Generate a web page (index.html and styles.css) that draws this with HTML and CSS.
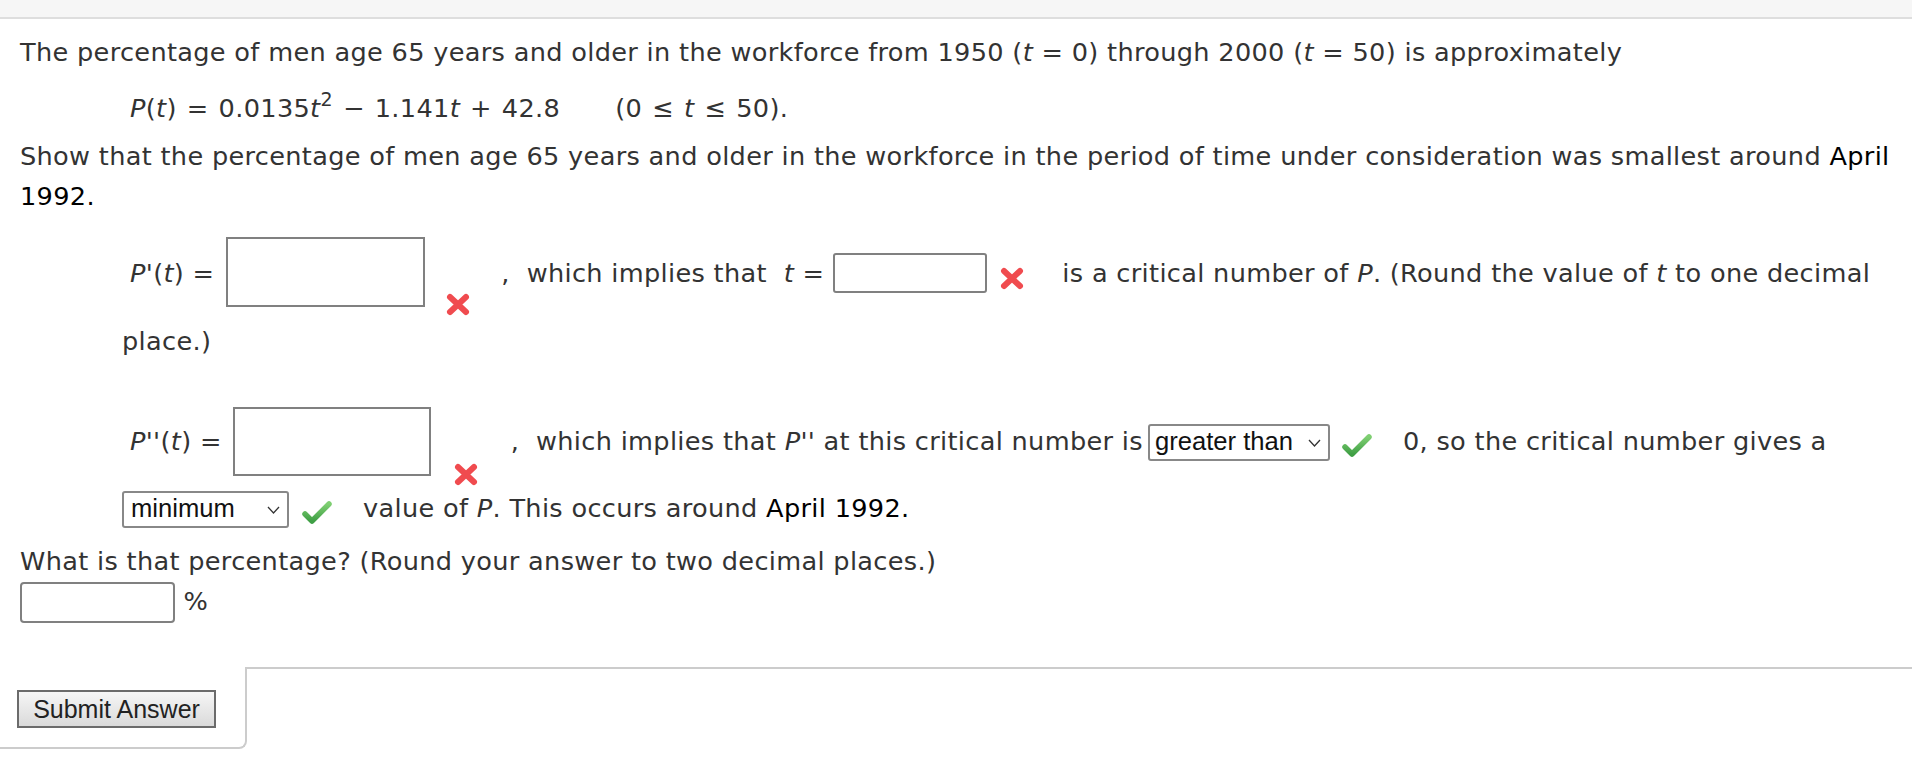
FILE: index.html
```html
<!DOCTYPE html>
<html lang="en">
<head>
<meta charset="utf-8">
<title>Question</title>
<link rel="stylesheet" href="styles.css">
</head>
<body>
<div class="topbar"></div>
<main class="content">
<p class="intro">The percentage of men age 65 years and older in the workforce from 1950 (<i>t</i> = 0) through 2000 (<i>t</i> = 50) is approximately</p>
<p class="formula"><i>P</i>(<i>t</i>) = 0.0135<i>t</i><sup>2</sup> − 1.141<i>t</i> + 42.8<span class="domain">(0 ≤ <i>t</i> ≤ 50).</span></p>
<p class="show">Show that the percentage of men age 65 years and older in the workforce in the period of time under consideration was smallest around <span class="dark">April 1992.</span></p>
<p class="step step-1"><span class="lbl"><i>P'</i>(<i>t</i>) =</span><span class="box box-lg"></span><svg class="mark xm xm-1" width="28" height="25" viewBox="0 0 28 25"><path d="M6 5 L22 20 M22 5 L6 20" stroke="#f04b4f" stroke-width="6" stroke-linecap="round"/></svg><span class="after">,&nbsp; which implies that&nbsp; <i>t</i> =</span><span class="box box-sm"></span><svg class="mark xm xm-2" width="28" height="25" viewBox="0 0 28 25"><path d="M6 5 L22 20 M22 5 L6 20" stroke="#f04b4f" stroke-width="6" stroke-linecap="round"/></svg><span class="tail">is a critical number of <i>P</i>. (Round the value of <i>t</i> to one decimal place.)</span></p>
<p class="step step-2"><span class="lbl"><i>P''</i>(<i>t</i>) =</span><span class="box box-lg2"></span><svg class="mark xm xm-3" width="28" height="25" viewBox="0 0 28 25"><path d="M6 5 L22 20 M22 5 L6 20" stroke="#f04b4f" stroke-width="6" stroke-linecap="round"/></svg><span class="after after-2">,&nbsp; which implies that <i>P''</i> at this critical number is</span><span class="sel sel-gt">greater than<svg class="chev" width="13" height="8" viewBox="0 0 13 8"><path d="M1 1 L6.5 7 L12 1" fill="none" stroke="#333" stroke-width="1.3"/></svg></span><svg class="mark ck ck-1" width="32" height="25" viewBox="0 0 32 25"><defs><linearGradient id="g1" x1="0" y1="0" x2="0" y2="1"><stop offset="0" stop-color="#7fcf72"/><stop offset="1" stop-color="#3f9f45"/></linearGradient></defs><path d="M4 14 L11 21 L28 4" fill="none" stroke="url(#g1)" stroke-width="5.5" stroke-linecap="round" stroke-linejoin="round"/></svg><span class="tail">0, so the critical number gives a </span><span class="sel sel-min">minimum<svg class="chev" width="13" height="8" viewBox="0 0 13 8"><path d="M1 1 L6.5 7 L12 1" fill="none" stroke="#333" stroke-width="1.3"/></svg></span><svg class="mark ck ck-2" width="32" height="25" viewBox="0 0 32 25"><path d="M4 14 L11 21 L28 4" fill="none" stroke="url(#g1)" stroke-width="5.5" stroke-linecap="round" stroke-linejoin="round"/></svg><span class="tail2">value of <i>P</i>. This occurs around <span class="dark">April 1992.</span></span></p>
<p class="final">What is that percentage? (Round your answer to two decimal places.)<br><span class="box box-pct"></span> %</p>
</main>
<div class="footer">
<div class="tab"><button class="submit" type="button">Submit Answer</button></div>
<div class="rest"></div>
</div>
</body>
</html>
```
FILE: styles.css
```css
* { box-sizing: border-box; }
html, body { margin: 0; padding: 0; background: #fff; }
body {
  font-family: "DejaVu Sans", Verdana, sans-serif;
  font-size: 25.6px;
  line-height: 40px;
  letter-spacing: 0.32px;
  color: #333;
}
.topbar {
  height: 19px;
  background: #f6f6f6;
  border-bottom: 2px solid #dedede;
}
.content { padding: 0 20px; }
p { margin: 0; }
.intro { margin-top: 13px; }
.formula { margin: 16px 0 0 110px; word-spacing: 1.6px; }
.formula sup { font-size: 19px; line-height: 0; vertical-align: 11px; }
.domain { margin-left: 55px; }
.show { margin-top: 8px; }
.dark { color: #000; }
.step { margin-left: 102px; }
.step-1 { margin-top: 21px; }
.step-2 { margin-top: 46px; }
.lbl { margin-left: 8px; }
.box {
  display: inline-block;
  border: 2px solid #808080;
  background: #fff;
}
.box-lg { width: 199px; height: 70px; margin-left: 12px; vertical-align: -25px; }
.box-lg2 { width: 198px; height: 69px; margin-left: 11px; vertical-align: -26px; }
.box-sm { width: 154px; height: 40px; margin-left: 9px; border-radius: 3px; vertical-align: -11px; }
.box-pct { width: 155px; height: 41px; border-radius: 4px; vertical-align: -13px; }
.mark { display: inline-block; }
.xm-1 { margin-left: 19px; vertical-align: -39px; margin-bottom: 4px; }
.xm-2 { margin-left: 11px; vertical-align: -9px; }
.xm-3 { margin-left: 21px; vertical-align: -38px; margin-bottom: 1px; }
.after { margin-left: 29px; }
.after-2 { margin-left: 31px; }
.tail { margin-left: 36px; }
.step-2 .after + .sel { margin-left: 5px; }
.sel {
  display: inline-flex;
  align-items: flex-start;
  justify-content: space-between;
  height: 37px;
  border: 2px solid #888;
  border-radius: 3px;
  font-family: "Liberation Sans", Arial, sans-serif;
  font-size: 25.6px;
  line-height: 25.6px;
  letter-spacing: 0;
  color: #111;
  padding: 3px 7px 0 5px;
}
.sel-gt { width: 182px; }
.sel-min { width: 167px; padding-left: 7px; }
.chev { margin-top: 10px; flex: none; }
.ck { vertical-align: -8px; }
.ck-1 { margin-left: 11px; }
.step-2 .ck-1 + .tail { margin-left: 30px; }
.ck-2 { margin-left: 12px; }
.tail2 { margin-left: 30px; }
.final { margin-top: 13px; }
.footer { display: flex; margin-top: 44px; }
.tab {
  width: 247px;
  height: 82px;
  border-right: 2px solid #ccc;
  border-bottom: 2px solid #ccc;
  border-bottom-right-radius: 8px;
  padding: 23px 0 0 17px;
}
.rest { flex: 1; border-top: 2px solid #ccc; }
.submit {
  display: flex;
  align-items: center;
  justify-content: center;
  width: 199px;
  height: 38px;
  margin: 0;
  padding: 0;
  border: 2px solid #6b6b6b;
  background: linear-gradient(#f6f6f6, #dadada);
  font-family: "Liberation Sans", Arial, sans-serif;
  font-size: 25px;
  letter-spacing: 0;
  color: #222;
}
```
